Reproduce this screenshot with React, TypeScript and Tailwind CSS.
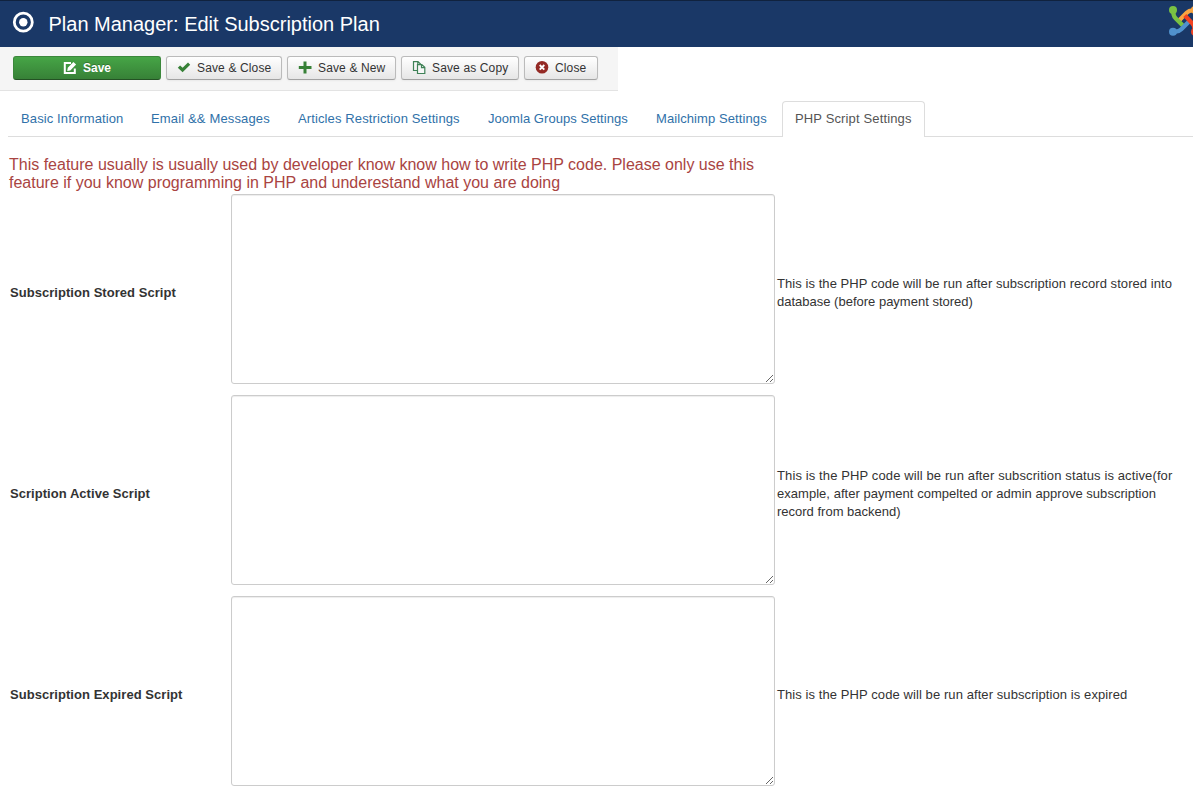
import React from "react";

type HelpLine = { text: string; spacing: string };
type ScriptField = { label: string; help: HelpLine[] };

const tabs = [
  { label: "Basic Information", box: "w-[130px] tracking-[.12px]" },
  { label: "Email && Messages", box: "w-[147px] tracking-[.15px]" },
  { label: "Articles Restriction Settings", box: "w-[190px] tracking-[.12px]" },
  { label: "Joomla Groups Settings", box: "w-[168px] tracking-[.05px]" },
  { label: "Mailchimp Settings", box: "w-[139px] tracking-[.09px]" },
];

const fields: ScriptField[] = [
  {
    label: "Subscription Stored Script",
    help: [
      { text: "This is the PHP code will be run after subscription record stored into", spacing: "tracking-[.062px]" },
      { text: "database (before payment stored)", spacing: "tracking-normal" },
    ],
  },
  {
    label: "Scription Active Script",
    help: [
      { text: "This is the PHP code will be run after subscrition status is active(for", spacing: "tracking-[.118px]" },
      { text: "example, after payment compelted or admin approve subscription", spacing: "tracking-[.03px]" },
      { text: "record from backend)", spacing: "tracking-normal" },
    ],
  },
  {
    label: "Subscription Expired Script",
    help: [
      { text: "This is the PHP code will be run after subscription is expired", spacing: "tracking-[.083px]" },
    ],
  },
];

function TargetIcon() {
  return (
    <svg className="h-[22px] w-[22px]" viewBox="0 0 22 22">
      <circle cx="11.3" cy="11.2" r="9" fill="none" stroke="#fff" strokeWidth="2.8" />
      <circle cx="11.3" cy="11.2" r="4.2" fill="#fff" />
    </svg>
  );
}

function EditIcon() {
  return (
    <svg className="h-[14px] w-[14px]" viewBox="0 0 14 14">
      <path d="M8 2H1.800v10h10V7.500" fill="none" stroke="#fff" strokeWidth="2" />
      <path d="M4.200 10l.6-3.200L10.400 1l2.700 2.600L7.300 9.400z" fill="#fff" />
    </svg>
  );
}

function CheckIcon() {
  return (
    <svg className="h-[14px] w-[14px]" viewBox="0 0 14 14">
      <path d="M.8 6.700l2.300-2.200 2.500 2.300L11 1.600l2.200 2.100L5.600 11.300z" fill="#378137" />
    </svg>
  );
}

function PlusIcon() {
  return (
    <svg className="h-[14px] w-[14px]" viewBox="0 0 14 14">
      <path d="M5.500.5h3v4.500H13.500v3H8.500v4.500h-3V8H.8V5h4.700z" fill="#378137" />
    </svg>
  );
}

function CopyIcon() {
  return (
    <svg className="h-[14px] w-[14px]" viewBox="0 0 14 14" fill="none" stroke="#3f8257" strokeWidth="1.200">
      <path d="M5 9.500H1.500V.6H6L8.500 3V4M5.800.8v2.700h2.700" />
      <path d="M5.500 3.600h4.300l3 2.700v6.200H5.500zM9.500 3.700v3h3.200" fill="#f7f7f7" />
    </svg>
  );
}

function CloseIcon() {
  return (
    <svg className="h-[14px] w-[14px]" viewBox="0 0 14 14">
      <circle cx="7" cy="6.300" r="6.300" fill="#942a25" />
      <path d="M4.700 4l4.600 4.600M9.300 4L4.700 8.600" stroke="#fff" strokeWidth="1.900" />
    </svg>
  );
}

function JoomlaLogo() {
  return (
    <svg className="h-[30px] w-[24px] shrink-0" viewBox="0 0 24 30" fill="none" strokeWidth="4.300">
      <path d="M26 4.800c-3.200-.8-6 -.3-8.300 2L10.300 14.200" stroke="#f9a541" />
      <path d="M4.800 4C4 7.200 4.500 10.300 6.800 12.600L13.800 19.600" stroke="#7ac143" />
      <path d="M4 25.200c3.200.8 6 .3 8.300-2L19.800 15.700" stroke="#5091cd" />
      <path d="M15.800 9.600L23.200 17.200c2.300 2.300 2.800 5.100 2 8.300" stroke="#f44321" />
      <circle cx="4" cy="4" r="4" fill="#7ac143" />
      <circle cx="4" cy="25.800" r="4" fill="#5091cd" />
      <circle cx="26" cy="4" r="4" fill="#f9a541" />
      <circle cx="26" cy="25.800" r="4" fill="#f44321" />
    </svg>
  );
}

function ToolButton({ icon, label, box }: { icon: React.ReactNode; label: string; box: string }) {
  return (
    <button
      className={`flex h-[24px] items-center gap-[6px] whitespace-nowrap rounded-[3px] border border-[#bbb] border-b-[#a2a2a2] bg-linear-to-b from-white to-[#e6e6e6] pl-[10px] text-[12px] leading-[18px] tracking-[.14px] text-[#333] shadow-[inset_0_1px_0_rgba(255,255,255,.2),0_1px_2px_rgba(0,0,0,.05)] ${box}`}
    >
      {icon}
      <span>{label}</span>
    </button>
  );
}

export default function App() {
  return (
    <div className="h-[789px] w-full overflow-hidden bg-white font-['Liberation_Sans',Arial,sans-serif] text-[13px] leading-[18px] text-[#333]">
      <header className="flex h-[47px] items-start justify-between border-t border-[#10223e] bg-[#1a3867]">
        <div className="flex pl-[12px] pt-[10px]">
          <TargetIcon />
          <h1 className="ml-[14.500px] whitespace-nowrap text-[20px] leading-[26px] text-white">
            Plan Manager: Edit Subscription Plan
          </h1>
        </div>
        <div className="pt-[5px]">
          <JoomlaLogo />
        </div>
      </header>

      <div className="flex h-[44px] w-[618px] items-start gap-[5px] border-b border-[#e3e3e3] bg-[#f5f5f5] pl-[13px] pt-[9px]">
        <button className="flex h-[24px] w-[148px] items-center justify-center gap-[6px] rounded-[3px] border border-[#3b873b] border-b-[#245224] bg-linear-to-b from-[#46a546] to-[#378137] text-[12px] font-bold text-white [text-shadow:0_-1px_0_rgba(0,0,0,.25)]">
          <EditIcon />
          <span>Save</span>
        </button>
        <ToolButton icon={<CheckIcon />} label="Save & Close" box="w-[116px]" />
        <ToolButton icon={<PlusIcon />} label="Save & New" box="w-[109px]" />
        <ToolButton icon={<CopyIcon />} label="Save as Copy" box="w-[118px]" />
        <ToolButton icon={<CloseIcon />} label="Close" box="w-[74px]" />
      </div>

      <nav className="ml-[8px] mt-[10px] flex h-[36px] items-stretch">
        {tabs.map((t) => (
          <a
            key={t.label}
            href="#"
            className={`flex shrink-0 items-center whitespace-nowrap border-b border-[#ddd] pl-[13px] text-[#3071a9] ${t.box}`}
          >
            {t.label}
          </a>
        ))}
        <a
          href="#"
          className="flex w-[143px] shrink-0 items-center whitespace-nowrap rounded-t-[4px] border border-b-0 border-[#ddd] pb-[2px] pl-[12px] tracking-[.14px] text-[#555]"
        >
          PHP Script Settings
        </a>
        <span className="grow border-b border-[#ddd]" />
      </nav>

      <main className="pl-[9px] pt-[19px]">
        <p className="h-[38px] whitespace-nowrap text-[16px] leading-[18px] text-[#a94442]">
          This feature usually is usually used by developer know know how to write PHP code. Please only use this
          <br />
          feature if you know programming in PHP and underestand what you are doing
        </p>
        <div className="flex flex-col gap-[11px]">
          {fields.map((f) => (
            <div key={f.label} className="flex">
              <div className="flex w-[222px] shrink-0 items-center pl-[1px] pt-[7px] font-bold tracking-[.045px]">
                {f.label}
              </div>
              <textarea
                aria-label={f.label}
                className="block h-[190px] w-[544px] shrink-0 resize rounded-[3px] border border-[#ccc] bg-white shadow-[inset_0_1px_1px_rgba(0,0,0,.075)] outline-none"
              />
              <div className="flex flex-col justify-center whitespace-nowrap pl-[2px] pt-[7px]">
                {f.help.map((line) => (
                  <span key={line.text} className={line.spacing}>
                    {line.text}
                  </span>
                ))}
              </div>
            </div>
          ))}
        </div>
      </main>
    </div>
  );
}
